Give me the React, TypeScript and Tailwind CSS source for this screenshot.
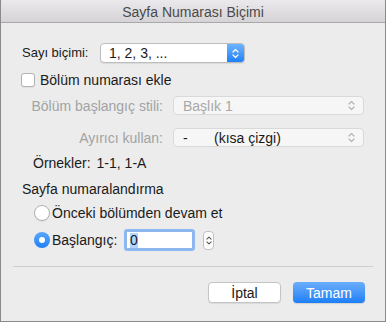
import React from "react";

const font = { fontFamily: '"Liberation Sans", Arial, sans-serif' };

// küçük yukarı/aşağı ok ikonu
function Chevrons({ color = "#fff", w = 7, h = 11 }: { color?: string; w?: number; h?: number }) {
  return (
    <svg width={w} height={h} viewBox="0 0 7 11" fill="none">
      <path d="M1 4 L3.5 1.5 L6 4" stroke={color} strokeWidth="1.2" strokeLinecap="round" strokeLinejoin="round" />
      <path d="M1 7 L3.5 9.5 L6 7" stroke={color} strokeWidth="1.2" strokeLinecap="round" strokeLinejoin="round" />
    </svg>
  );
}

function ActivePopup({ value }: { value: string }) {
  return (
    <div className="flex h-[20px] w-[145px] shrink-0 items-stretch overflow-hidden rounded-[4px] border border-[#bdbdbd] bg-white shadow-[0_1px_1px_rgba(0,0,0,0.08)]">
      <div className="flex flex-1 items-center pl-[8px] text-[#1a1a1a]">{value}</div>
      <div className="flex w-[17px] items-center justify-center bg-gradient-to-b from-[#6db3fb] to-[#1b80fa]">
        <Chevrons />
      </div>
    </div>
  );
}

function DisabledPopup({ children }: { children: React.ReactNode }) {
  return (
    <div className="flex h-[19px] w-[191px] shrink-0 items-center rounded-[4px] border border-[#d9d9d9] bg-[#f6f6f6] pl-[9px] pr-[8px] text-[#a8a8a8]">
      <div className="flex flex-1 items-center">{children}</div>
      <Chevrons color="#b5b5b5" />
    </div>
  );
}

export default function App() {
  return (
    <div style={font} className="flex h-[322px] w-[386px] flex-col whitespace-nowrap border-x border-b border-[#8a8a8a] bg-[#ececec] text-[14px] leading-[16px] text-[#1a1a1a]">
      {/* başlık çubuğu */}
      <div className="flex h-[23px] shrink-0 items-center justify-center border-b border-[#a8a8a8] bg-gradient-to-b from-[#ebe9eb] to-[#d5d3d5] pt-[2px] text-[#4a4a4a]">
        Sayfa Numarası Biçimi
      </div>

      {/* Sayı biçimi */}
      <div className="mt-[20px] flex h-[20px] items-center">
        <span className="w-[99px] shrink-0 pl-[21px] text-[13px]">Sayı biçimi:</span>
        <ActivePopup value="1, 2, 3, ..." />
      </div>

      {/* Bölüm numarası ekle */}
      <div className="ml-[20px] mt-[10px] flex h-[14px] items-center">
        <div className="h-[14px] w-[14px] shrink-0 rounded-[3px] border border-[#b3b3b3] bg-white shadow-[0_1px_1px_rgba(0,0,0,0.06)]" />
        <span className="ml-[5px]">Bölüm numarası ekle</span>
      </div>

      <div className="mt-[9px] flex h-[19px] items-center">
        <span className="w-[172px] shrink-0 pr-[10px] text-right text-[#a3a3a3]">Bölüm başlangıç stili:</span>
        <DisabledPopup>Başlık 1</DisabledPopup>
      </div>

      <div className="mt-[13px] flex h-[19px] items-center">
        <span className="w-[172px] shrink-0 pr-[10px] text-right text-[#a3a3a3]">Ayırıcı kullan:</span>
        <DisabledPopup>
          <span className="w-[31px] text-[#1a1a1a]">-</span>
          <span className="text-[#1a1a1a]">(kısa çizgi)</span>
        </DisabledPopup>
      </div>

      <div className="ml-[32px] mt-[8px] flex h-[16px] items-center">
        <span>Örnekler:</span>
        <span className="ml-[6px]">1-1, 1-A</span>
      </div>

      <div className="ml-[21px] mt-[10px] flex h-[16px] items-center">Sayfa numaralandırma</div>

      {/* radyo seçenekleri */}
      <div className="ml-[33px] mt-[8px] flex h-[16px] items-center">
        <div className="h-[16px] w-[16px] shrink-0 rounded-full border border-[#b0b0b0] bg-white shadow-[0_1px_1px_rgba(0,0,0,0.06)]" />
        <span className="ml-[2px]">Önceki bölümden devam et</span>
      </div>

      <div className="ml-[33px] mt-[8px] flex h-[22px] items-center">
        <div className="flex h-[16px] w-[16px] shrink-0 items-center justify-center rounded-full bg-gradient-to-b from-[#5aa8fa] to-[#1d7ff8]">
          <div className="h-[6px] w-[6px] rounded-full bg-white" />
        </div>
        <span className="ml-[2px] w-[72px] shrink-0">Başlangıç:</span>
        <div className="flex h-[22px] w-[71px] shrink-0 items-center rounded-[3px] border-[3px] border-[#8db8ef] bg-white pl-[3px]">
          <span className="bg-[#b3d5fd] leading-[15px]">0</span>
        </div>
        <div className="ml-[8px] flex h-[19px] w-[11px] shrink-0 items-center justify-center rounded-[4px] border border-[#c0c0c0] bg-white">
          <Chevrons color="#555" w={6} h={11} />
        </div>
      </div>

      <div className="mx-[12px] mt-[15px] h-px bg-[#cfcfcf]" />

      {/* düğmeler */}
      <div className="mt-[15px] flex h-[21px] justify-end pr-[20px]">
        <button className="h-[21px] w-[73px] rounded-[4px] border border-[#c4c4c4] bg-white text-[#1a1a1a] shadow-[0_1px_1px_rgba(0,0,0,0.08)]">
          İptal
        </button>
        <button className="ml-[12px] h-[21px] w-[72px] rounded-[4px] bg-gradient-to-b from-[#6aaefa] to-[#1a7ef7] text-white shadow-[0_1px_1px_rgba(0,0,0,0.12)]">
          Tamam
        </button>
      </div>
    </div>
  );
}
